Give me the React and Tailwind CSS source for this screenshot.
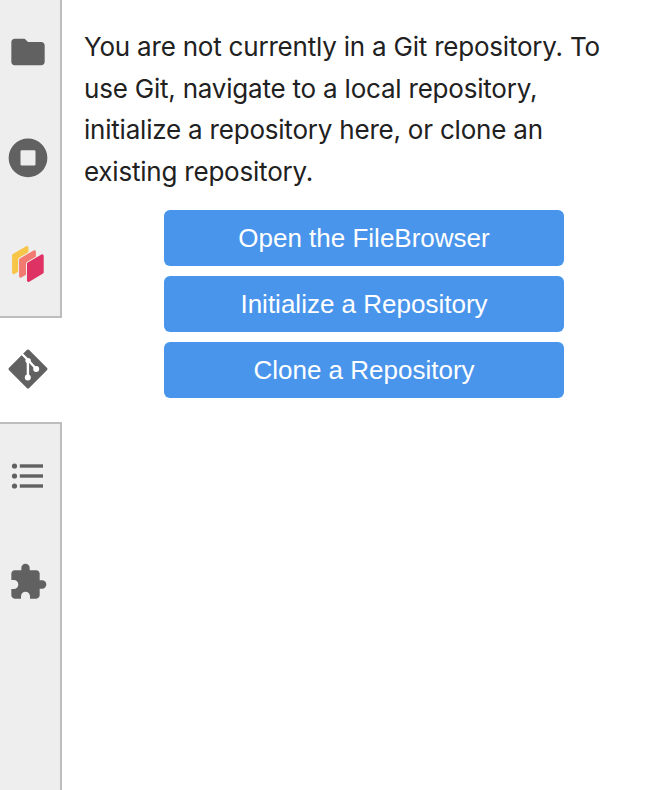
import { MdExtension, MdFolder } from "react-icons/md";

function RunningIcon() {
  return (
    <svg className="size-[40px]" viewBox="0 0 512 512" fill="currentColor">
      <path
        fillRule="evenodd"
        d="M256 6a248 248 0 1 0 0 496a248 248 0 1 0 0-496zM176 157h160q16 0 16 16v164q0 16-16 16H176q-16 0-16-16V173q0-16 16-16z"
      />
    </svg>
  );
}

function LayersIcon() {
  return (
    <svg className="size-[40px]" viewBox="0 0 40 40">
      <g strokeLinejoin="round">
        <path d="M5.6 11.4L18.9 3.6V21L5.6 28.8Z" fill="#f7c548" stroke="#f7c548" strokeWidth="3" />
        <path d="M12.6 15.7L26.4 7.7V24L12.6 32.2Z" fill="#eeeeee" stroke="#eeeeee" strokeWidth="5" />
        <path d="M12.6 15.7L26.4 7.7V24L12.6 32.2Z" fill="#f37a70" stroke="#f37a70" strokeWidth="3" />
        <path d="M20.5 19.9L34.2 11.9V28.2L20.5 36.4Z" fill="#eeeeee" stroke="#eeeeee" strokeWidth="5" />
        <path d="M20.5 19.9L34.2 11.9V28.2L20.5 36.4Z" fill="#df3264" stroke="#df3264" strokeWidth="3" />
      </g>
    </svg>
  );
}

function GitIcon() {
  return (
    <svg className="size-[40px]" viewBox="0 0 40 40">
      <path
        d="M20 2.3L37.7 20L20 37.7L2.3 20Z"
        fill="currentColor"
        stroke="currentColor"
        strokeWidth="3.4"
        strokeLinejoin="round"
      />
      <path d="M13 4L20 11L28.3 20M19.9 11V28.5" fill="none" stroke="white" strokeWidth="2.4" />
      <g fill="white">
        <circle cx="20.1" cy="11.6" r="2.7" />
        <circle cx="19.8" cy="28.5" r="3" />
        <circle cx="28.2" cy="20.1" r="3" />
      </g>
    </svg>
  );
}

function ContentsIcon() {
  return (
    <svg className="size-[40px]" viewBox="0 0 40 40" fill="currentColor">
      {[10, 20, 30].map((y) => (
        <g key={y}>
          <circle cx="6.5" cy={y} r="2.6" />
          <rect x="11.8" y={y - 1.7} width="23.2" height="3.4" />
        </g>
      ))}
    </svg>
  );
}

const actions = ["Open the FileBrowser", "Initialize a Repository", "Clone a Repository"];

export default function App() {
  return (
    <div className="flex h-[790px] w-[654px] overflow-hidden bg-white">
      <nav className="flex w-[62px] shrink-0 flex-col text-[#616161]">
        <div className="flex h-[318px] flex-col gap-[66px] border-r-2 border-b-2 border-[#bdbdbd] bg-[#eeeeee] pt-[32px] pl-[8px]">
          <MdFolder className="size-[40px] shrink-0" />
          <RunningIcon />
          <LayersIcon />
        </div>
        <div className="flex h-[104px] items-start pt-[31px] pl-[8px]">
          <GitIcon />
        </div>
        <div className="flex flex-1 flex-col gap-[66px] border-t-2 border-r-2 border-[#bdbdbd] bg-[#eeeeee] pt-[32px] pl-[8px]">
          <ContentsIcon />
          <MdExtension className="size-[40px] shrink-0" />
        </div>
      </nav>
      <main className="flex flex-1 flex-col pt-[26px] pr-[10px] pl-[22px]">
        <p className="font-['Inter',sans-serif] text-[26px] leading-[41.6px] tracking-[-0.21px] whitespace-nowrap text-[#212121]">
          You are not currently in a Git repository. To
          <br />
          use Git, navigate to a local repository,
          <br />
          initialize a repository here, or clone an
          <br />
          existing repository.
        </p>
        <div className="mt-[17.6px] flex flex-col items-center gap-[10px]">
          {actions.map((label) => (
            <button
              key={label}
              className="h-[56px] w-[400px] rounded-[6px] bg-[#4a95ec] pt-[2px] font-['Liberation_Sans',Arial,sans-serif] text-[26px] text-white"
            >
              {label}
            </button>
          ))}
        </div>
      </main>
    </div>
  );
}
